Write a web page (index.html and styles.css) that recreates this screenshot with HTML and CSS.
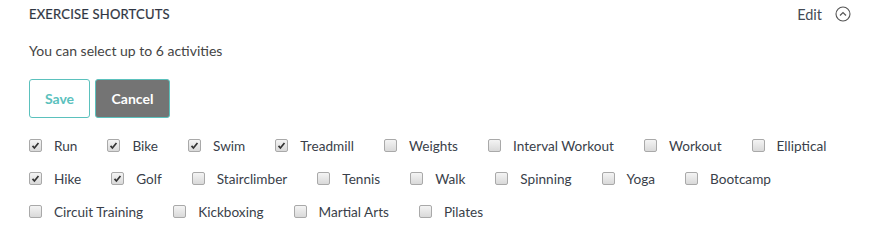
FILE: index.html
```html
<!DOCTYPE html>
<html>
<head>
<meta charset="utf-8">
<link rel="stylesheet" href="styles.css">
</head>
<body>
<div class="panel">
  <div class="header">
    <div class="title">EXERCISE SHORTCUTS</div>
    <div class="edit">Edit
      <svg class="chev" width="16" height="16" viewBox="0 0 16 16"><circle cx="8" cy="8" r="7" fill="none" stroke="#555" stroke-width="1.1"/><path d="M5 9.5 L8 6.5 L11 9.5" fill="none" stroke="#555" stroke-width="1.2"/></svg>
    </div>
  </div>
  <p class="note">You can select up to 6 activities</p>
  <div class="buttons">
    <button class="btn save">Save</button>
    <button class="btn cancel">Cancel</button>
  </div>
  <div class="grid">
    <div class="row">
      <label class="item"><span class="box on"><svg viewBox="0 0 13 13"><path d="M3 7 L5.2 9.5 L10 3.5" fill="none" stroke="#333" stroke-width="2"/></svg></span>Run</label>
      <label class="item"><span class="box on"><svg viewBox="0 0 13 13"><path d="M3 7 L5.2 9.5 L10 3.5" fill="none" stroke="#333" stroke-width="2"/></svg></span>Bike</label>
      <label class="item"><span class="box on"><svg viewBox="0 0 13 13"><path d="M3 7 L5.2 9.5 L10 3.5" fill="none" stroke="#333" stroke-width="2"/></svg></span>Swim</label>
      <label class="item"><span class="box on"><svg viewBox="0 0 13 13"><path d="M3 7 L5.2 9.5 L10 3.5" fill="none" stroke="#333" stroke-width="2"/></svg></span>Treadmill</label>
      <label class="item"><span class="box"></span>Weights</label>
      <label class="item"><span class="box"></span>Interval Workout</label>
      <label class="item"><span class="box"></span>Workout</label>
      <label class="item"><span class="box"></span>Elliptical</label>
    </div>
    <div class="row">
      <label class="item"><span class="box on"><svg viewBox="0 0 13 13"><path d="M3 7 L5.2 9.5 L10 3.5" fill="none" stroke="#333" stroke-width="2"/></svg></span>Hike</label>
      <label class="item"><span class="box on"><svg viewBox="0 0 13 13"><path d="M3 7 L5.2 9.5 L10 3.5" fill="none" stroke="#333" stroke-width="2"/></svg></span>Golf</label>
      <label class="item"><span class="box"></span>Stairclimber</label>
      <label class="item"><span class="box"></span>Tennis</label>
      <label class="item"><span class="box"></span>Walk</label>
      <label class="item"><span class="box"></span>Spinning</label>
      <label class="item"><span class="box"></span>Yoga</label>
      <label class="item"><span class="box"></span>Bootcamp</label>
    </div>
    <div class="row">
      <label class="item"><span class="box"></span>Circuit Training</label>
      <label class="item"><span class="box"></span>Kickboxing</label>
      <label class="item"><span class="box"></span>Martial Arts</label>
      <label class="item"><span class="box"></span>Pilates</label>
    </div>
  </div>
</div>
</body>
</html>
```
FILE: styles.css
```css
html, body { margin: 0; padding: 0; background: #fff; }
body { font-family: Lato, "Liberation Sans", sans-serif; color: #333a44; }
.panel { padding: 3px 28px 0 29px; }
.header { display: flex; justify-content: space-between; align-items: center; height: 22px; }
.title { font-size: 13px; font-weight: 400; letter-spacing: 0.2px; color: #2f3542; -webkit-text-stroke: 0.2px #2f3542; }
.edit { display: flex; align-items: center; gap: 13px; font-size: 14.5px; color: #444a55; }
.chev { display: block; }
.note { margin: 17px 0 0; font-size: 14px; line-height: 17px; color: #444; }
.buttons { display: flex; gap: 5px; margin-top: 20px; }
.btn { height: 39px; border: 1px solid #5bc1bd; border-radius: 3px; font-family: inherit; font-size: 14px; font-weight: 700; padding: 0; }
.save { width: 61px; background: #fff; color: #5bc1bd; }
.cancel { width: 75px; background: #747474; color: #fff; border-color: #5bc1bd; }
.grid { margin-top: 11px; display: flex; flex-direction: column; }
.row { display: flex; height: 33px; align-items: center; }
.item { display: flex; align-items: center; font-size: 13.6px; color: #3a3f4a; margin-right: 30px; white-space: nowrap; }
.box { flex: none; width: 11px; height: 11px; border: 1px solid #a9a9a9; border-radius: 2px; background: linear-gradient(#f4f4f4, #d9d9d9); margin-right: 12px; display: flex; }
.box svg { width: 11px; height: 11px; }
```
